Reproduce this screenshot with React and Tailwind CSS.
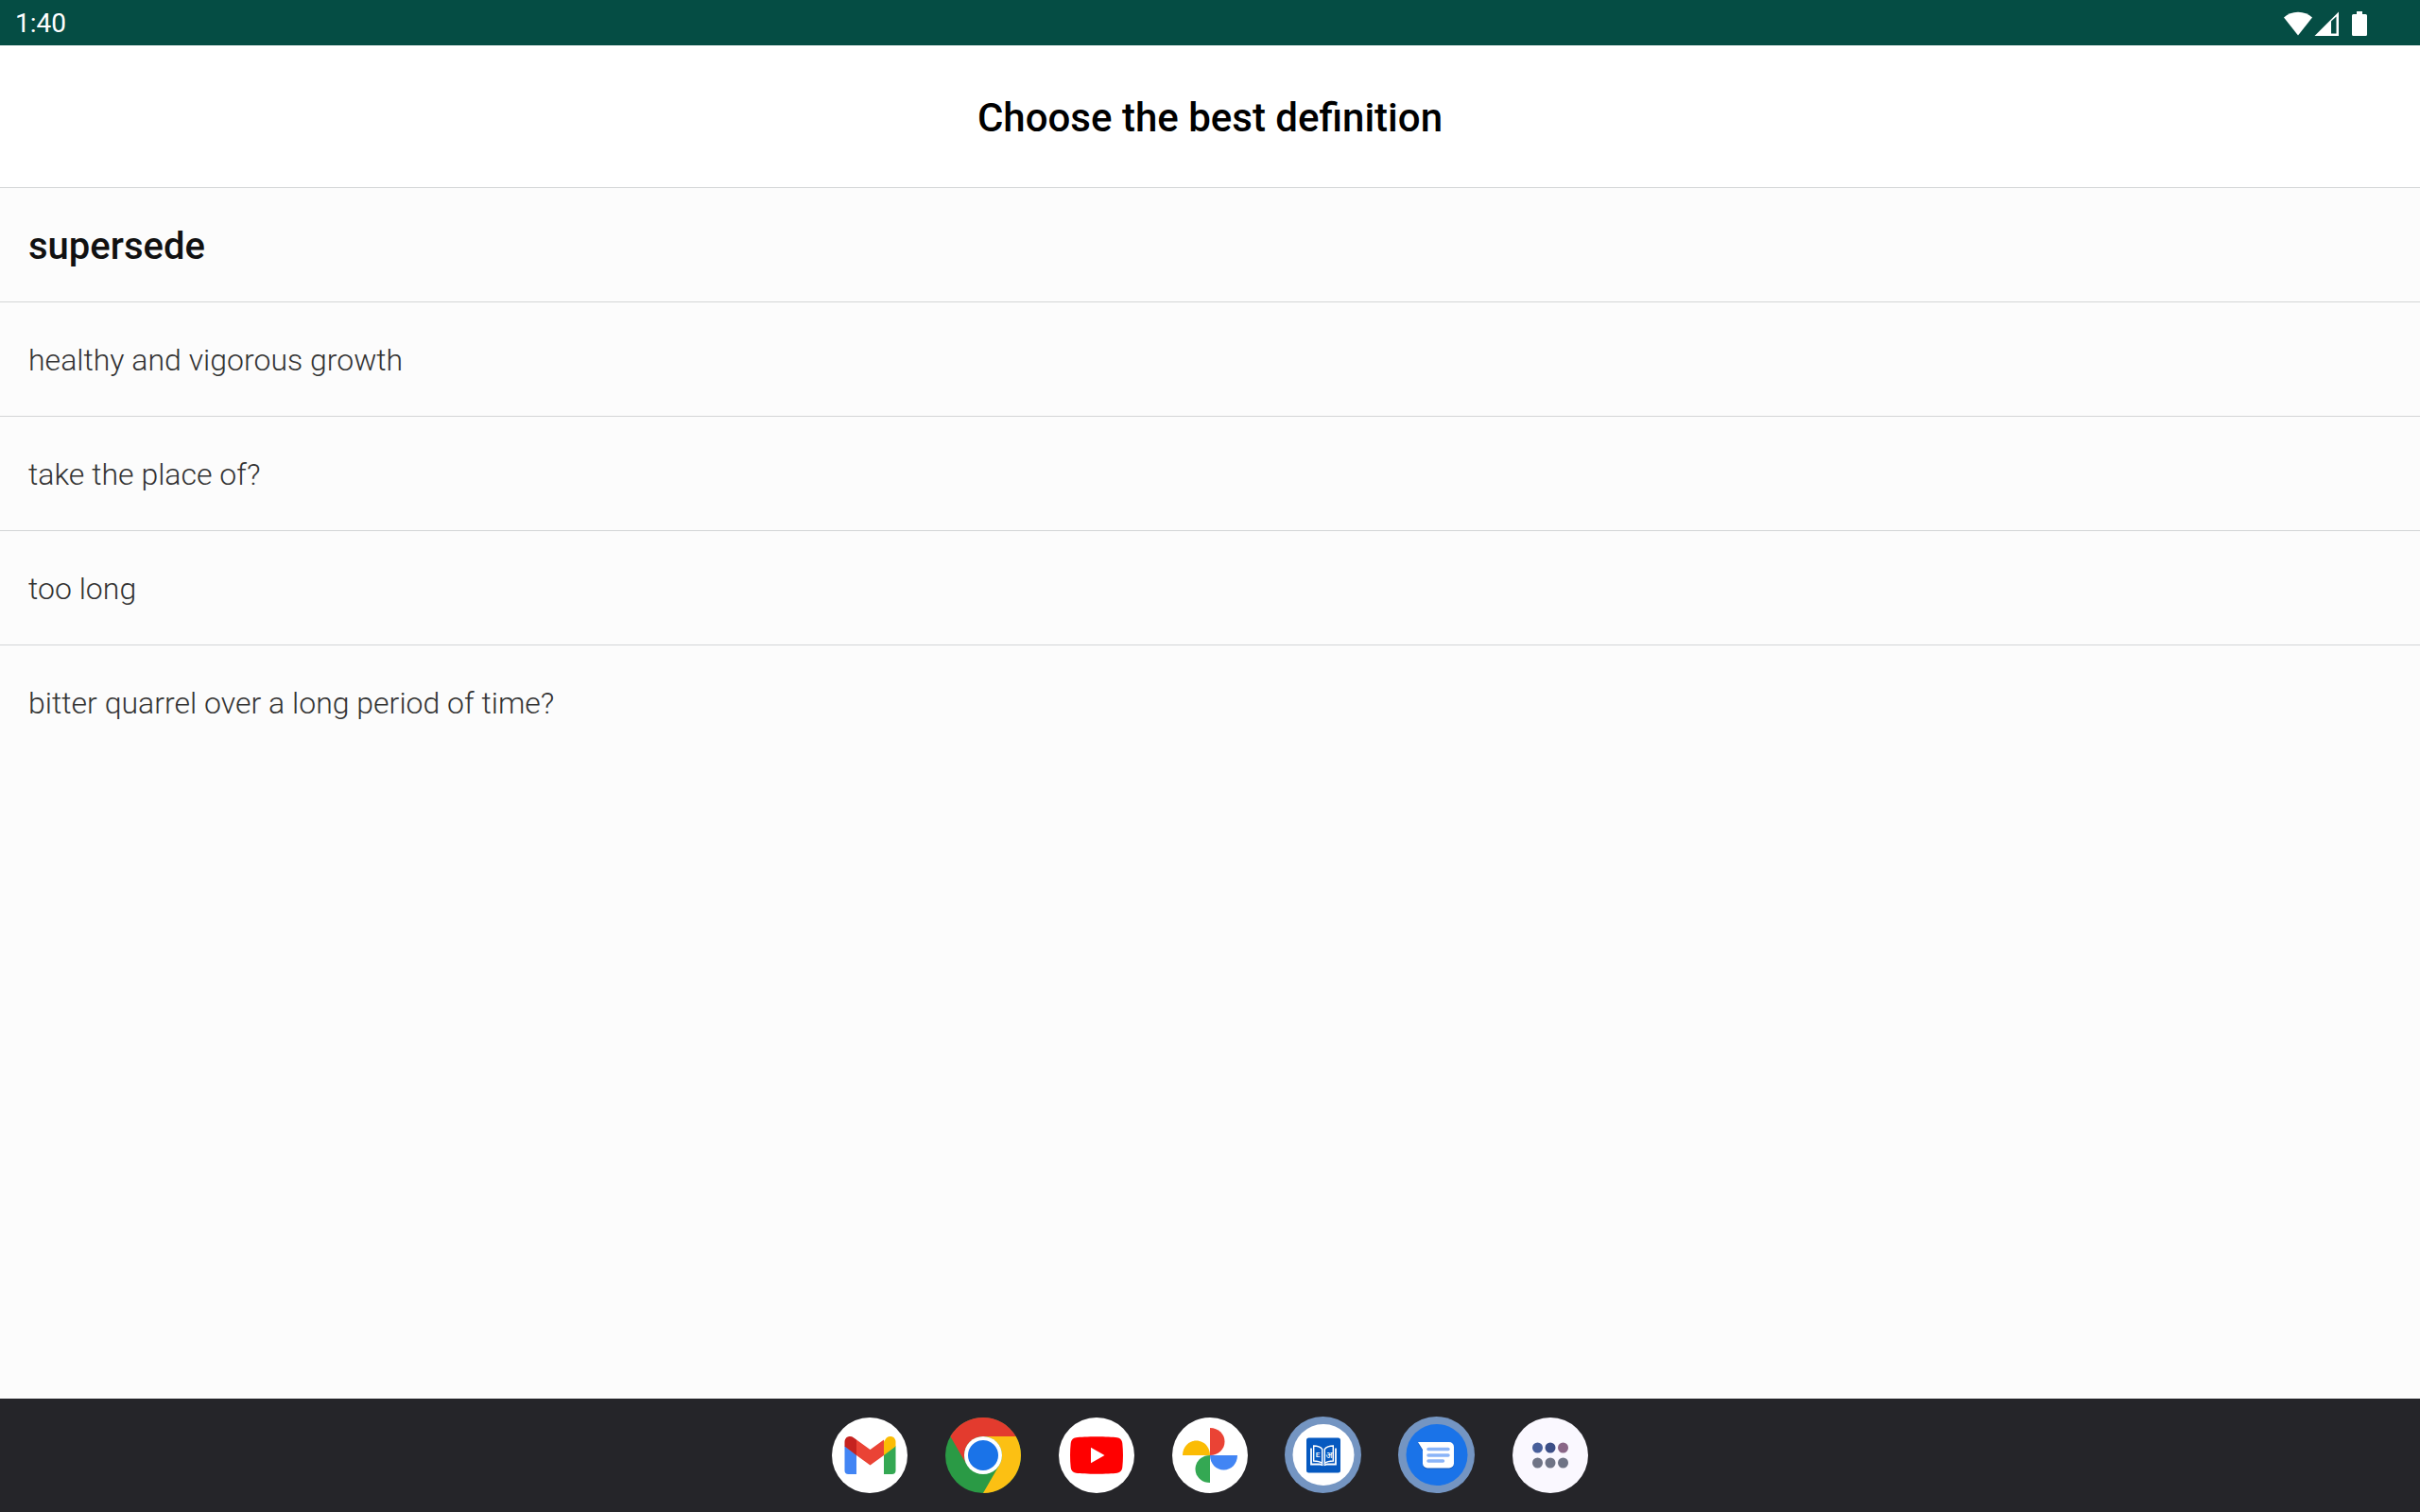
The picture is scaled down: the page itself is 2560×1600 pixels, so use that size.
import React, { useState } from 'react';

const WORD = 'supersede';

const definitions = [
  'healthy and vigorous growth',
  'take the place of?',
  'too long',
  'bitter quarrel over a long period of time?',
];

const StatusBar = () => (
  <div className="flex h-12 shrink-0 items-center justify-between bg-[#054d44] pl-4 pr-14 pt-0.5 text-white">
    <span className="text-[28px] leading-8">1:40</span>
    <div className="flex items-center">
      <svg className="h-[26px] w-[30px]" viewBox="0 0 30 26" fill="#fff">
        <path d="M15 25.5 0 6.5C4 3 9 .8 15 .8S26 3 30 6.5Z" />
      </svg>
      <svg className="ml-[2px] h-[26px] w-[26px]" viewBox="0 0 26 26" fill="#fff">
        <path fillRule="evenodd" d="M26 .5V26H.5ZM18 10.500V23.500H23.500V5.500Z" />
      </svg>
      <svg className="ml-[14px] h-[26px] w-4" viewBox="0 0 16 26" fill="#fff">
        <path d="M5 0h6v3h3.500A1.500 1.500 0 0 1 16 4.500v20a1.500 1.500 0 0 1-1.500 1.500h-13A1.500 1.500 0 0 1 0 24.500v-20A1.500 1.500 0 0 1 1.500 3H5Z" />
      </svg>
    </div>
  </div>
);

const GmailIcon = () => (
  <svg className="size-20" viewBox="0 0 80 80">
    <circle cx="40" cy="40" r="40" fill="#fff" />
    <path d="M13.500 30 26 39V60H17.500a4 4 0 0 1-4-4Z" fill="#4285f4" />
    <path d="M67.500 30 55 39V60h8.500a4 4 0 0 0 4-4Z" fill="#34a853" />
    <path d="M55 25.500V40l12.500-9.500V26c0-5.500-5.500-7.500-9.700-4.600Z" fill="#fbbc04" />
    <path d="M26 40V23.500l14.500 10.500L55 23.500V40L40.500 50.500Z" fill="#ea4335" />
    <path d="M13.500 26v4.500L26 40V23.500l-2.800-2.100C19 18.500 13.500 20.500 13.500 26Z" fill="#c5221f" />
  </svg>
);

const ChromeIcon = () => (
  <svg className="size-20" viewBox="0 0 80 80">
    <circle cx="40" cy="40" r="40" fill="#2a9a45" />
    <path d="M5.360 20A40 40 0 0 1 74.640 20H40A20 20 0 0 0 22.680 50Z" fill="#e33b2e" />
    <path d="M74.640 20A40 40 0 0 1 40 80L57.320 50A20 20 0 0 0 40 20Z" fill="#fcc013" />
    <circle cx="40" cy="40" r="20" fill="#fff" />
    <circle cx="40" cy="40" r="16" fill="#1a73e8" />
  </svg>
);

const YoutubeIcon = () => (
  <svg className="size-20" viewBox="0 0 80 80">
    <circle cx="40" cy="40" r="40" fill="#fff" />
    <path d="M40 20.300c9 0 17.500.3 21.800 1 3.300.6 5.200 2.800 5.500 6 .9 8 .9 17.400 0 25.400-.3 3.200-2.200 5.400-5.500 6-8.600 1.300-35 1.300-43.600 0-3.300-.6-5.200-2.800-5.500-6-.9-8-.9-17.400 0-25.400.3-3.200 2.200-5.400 5.500-6 4.300-.7 12.800-1 21.800-1Z" fill="#f00" />
    <path d="M34 31.700v16.600L48.500 40Z" fill="#fff" />
  </svg>
);

const PhotosIcon = () => (
  <svg className="size-20" viewBox="0 0 80 80">
    <circle cx="40" cy="40" r="40" fill="#fff" />
    <path d="M40 11c9 0 15.500 6.500 15.500 14.500S49 40 40 40Z" fill="#ea4335" />
    <path d="M69 40c0 9-6.500 15.500-14.500 15.500S40 49 40 40Z" fill="#4285f4" />
    <path d="M40 69c-9 0-15.500-6.500-15.500-14.500S31 40 40 40Z" fill="#34a853" />
    <path d="M11 40c0-9 6.500-15.500 14.500-15.500S40 31 40 40Z" fill="#fbbc04" />
  </svg>
);

const DictionaryIcon = () => (
  <svg className="size-20 overflow-visible" viewBox="0 0 80 80">
    <circle cx="39.500" cy="39.500" r="40.500" fill="#7495c2" />
    <circle cx="40" cy="39.500" r="32.500" fill="#fff" />
    <rect x="22" y="21.500" width="36" height="37" rx="2.500" fill="#0659c0" />
    {/* cover, then the two pages */}
    <path d="M27 32.500V49.500H36L39.500 50.500M53 32.500V49.500H44L40.500 50.500" fill="none" stroke="#fff" strokeWidth="1.800" />
    <path d="M29.700 30c3.500 0 7 1 9 3.500v15c-2.500-2-5.500-2.500-9-2.500ZM50.300 30c-3.500 0-7 1-9 3.500v15c2.500-2 5.500-2.500 9-2.500Z" fill="#0659c0" stroke="#fff" strokeWidth="1.400" />
    <text x="34" y="42" textAnchor="middle" fill="#fff" className="text-[8px] font-medium">E</text>
    <text x="46" y="43" textAnchor="middle" fill="#fff" className="font-['Noto_Sans',sans-serif] text-[9px] font-medium">अ</text>
  </svg>
);

const MessagesIcon = () => (
  <svg className="size-20 overflow-visible" viewBox="0 0 80 80">
    <circle cx="39.500" cy="39.500" r="40.500" fill="#7495c2" />
    <circle cx="40" cy="39.500" r="32.500" fill="#1a73e8" />
    <path d="M20 27.500h33a5 5 0 0 1 5 5v17a5 5 0 0 1-5 5H30a5 5 0 0 1-5-5v-14Z" fill="#1459b8" />
    <path d="M20 26h33a5 5 0 0 1 5 5v17.500a5 5 0 0 1-5 5H30a5 5 0 0 1-5-5V34Z" fill="#fff" />
    <path d="M31 33.500h21M31 40h21M31 46h15.500" stroke="#8ab4f8" strokeWidth="3.500" strokeLinecap="round" />
  </svg>
);

const AllAppsIcon = () => (
  <svg className="size-20" viewBox="0 0 80 80">
    <circle cx="40" cy="40" r="40" fill="#faf8ff" />
    <circle cx="26.500" cy="32" r="5.500" fill="#485f9b" />
    <circle cx="40" cy="32" r="5.500" fill="#3c4f87" />
    <circle cx="53.500" cy="32" r="5.500" fill="#8a6788" />
    <circle cx="26.500" cy="48" r="5.500" fill="#6f7486" />
    <circle cx="40" cy="48" r="5.500" fill="#6f7486" />
    <circle cx="53.500" cy="48" r="5.500" fill="#6f7486" />
  </svg>
);

const apps = [
  { name: 'Gmail', Icon: GmailIcon },
  { name: 'Chrome', Icon: ChromeIcon },
  { name: 'YouTube', Icon: YoutubeIcon },
  { name: 'Photos', Icon: PhotosIcon },
  { name: 'Dictionary', Icon: DictionaryIcon },
  { name: 'Messages', Icon: MessagesIcon },
  { name: 'All apps', Icon: AllAppsIcon },
];

export default function App() {
  const [selected, setSelected] = useState(null);

  return (
    <div className="flex min-h-screen flex-col bg-[#fcfcfc] font-['Roboto',sans-serif]">
      <StatusBar />

      <header className="flex h-[151px] items-center justify-center border-b border-[#d3d5d6] bg-white pt-1">
        <h1 className="text-[42px] font-medium leading-[48px] text-black">Choose the best definition</h1>
      </header>

      <main className="flex-1">
        <h2 className="flex h-[121px] items-center border-b border-[#d3d5d6] px-[30px] pt-1 text-[40px] font-medium leading-[48px] text-[#111]">
          {WORD}
        </h2>
        <ul className="divide-y divide-[#d3d5d6]">
          {definitions.map((text, i) => (
            <li key={text}>
              <button
                className="flex h-[120px] w-full items-center px-[30px] pt-0.5 text-left text-[32px] font-light leading-10 text-[#333]"
                aria-pressed={selected === i}
                onClick={() => setSelected(i)}
              >
                {text}
              </button>
            </li>
          ))}
        </ul>
      </main>

      {/* Taskbar */}
      <nav className="flex h-[120px] shrink-0 items-center justify-center gap-10 bg-[#252529]">
        {apps.map(({ name, Icon }) => (
          <button key={name} aria-label={name}>
            <Icon />
          </button>
        ))}
      </nav>
    </div>
  );
}
